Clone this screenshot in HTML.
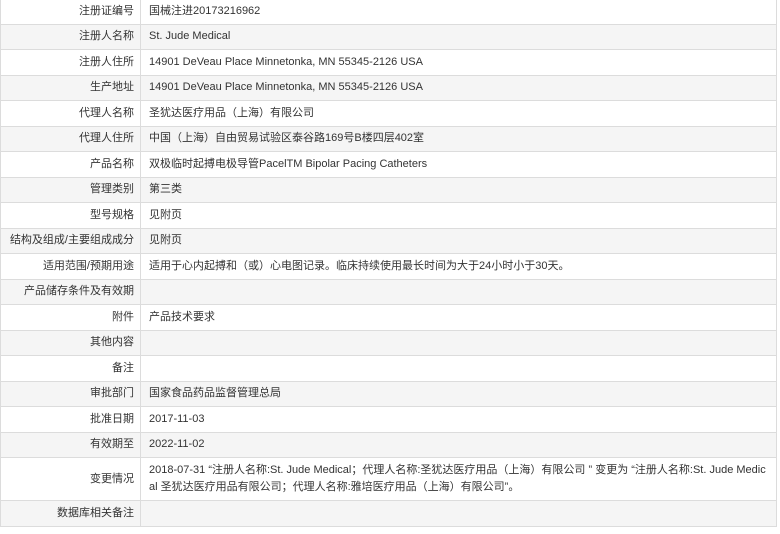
<!DOCTYPE html>
<html><head><meta charset="utf-8"><style>
html,body{margin:0;padding:0;background:#fff;width:780px;height:534px;overflow:hidden}
table{position:absolute;left:0;top:-2px;width:777px;border-collapse:collapse;table-layout:fixed;font-family:"Liberation Sans","Noto Sans CJK SC",sans-serif;font-size:11px;color:#333}
td{border:1px solid #dcdcdc;height:25.5px;padding:0 8px;box-sizing:border-box;line-height:17px}
td.l{width:140px;text-align:right;padding:0 6px 0 0;white-space:nowrap}
tr:nth-child(even) td{background:#f5f5f5}
tr.t td{height:43px}
</style></head><body>
<table>
<tr><td class="l">注册证编号</td><td>国械注进20173216962</td></tr>
<tr><td class="l">注册人名称</td><td>St. Jude Medical</td></tr>
<tr><td class="l">注册人住所</td><td>14901 DeVeau Place Minnetonka, MN 55345-2126 USA</td></tr>
<tr><td class="l">生产地址</td><td>14901 DeVeau Place Minnetonka, MN 55345-2126 USA</td></tr>
<tr><td class="l">代理人名称</td><td>圣犹达医疗用品（上海）有限公司</td></tr>
<tr><td class="l">代理人住所</td><td>中国（上海）自由贸易试验区泰谷路169号B楼四层402室</td></tr>
<tr><td class="l">产品名称</td><td>双极临时起搏电极导管PacelTM Bipolar Pacing Catheters</td></tr>
<tr><td class="l">管理类别</td><td>第三类</td></tr>
<tr><td class="l">型号规格</td><td>见附页</td></tr>
<tr><td class="l">结构及组成/主要组成成分</td><td>见附页</td></tr>
<tr><td class="l">适用范围/预期用途</td><td>适用于心内起搏和（或）心电图记录。临床持续使用最长时间为大于24小时小于30天。</td></tr>
<tr><td class="l">产品储存条件及有效期</td><td></td></tr>
<tr><td class="l">附件</td><td>产品技术要求</td></tr>
<tr><td class="l">其他内容</td><td></td></tr>
<tr><td class="l">备注</td><td></td></tr>
<tr><td class="l">审批部门</td><td>国家食品药品监督管理总局</td></tr>
<tr><td class="l">批准日期</td><td>2017-11-03</td></tr>
<tr><td class="l">有效期至</td><td>2022-11-02</td></tr>
<tr class="t"><td class="l">变更情况</td><td style="word-break:break-all">2018-07-31 “注册人名称:St. Jude Medical；代理人名称:圣犹达医疗用品（上海）有限公司 ” 变更为 “注册人名称:St. Jude Medical 圣犹达医疗用品有限公司；代理人名称:雅培医疗用品（上海）有限公司”。</td></tr>
<tr><td class="l">数据库相关备注</td><td></td></tr>
</table>
</body></html>
